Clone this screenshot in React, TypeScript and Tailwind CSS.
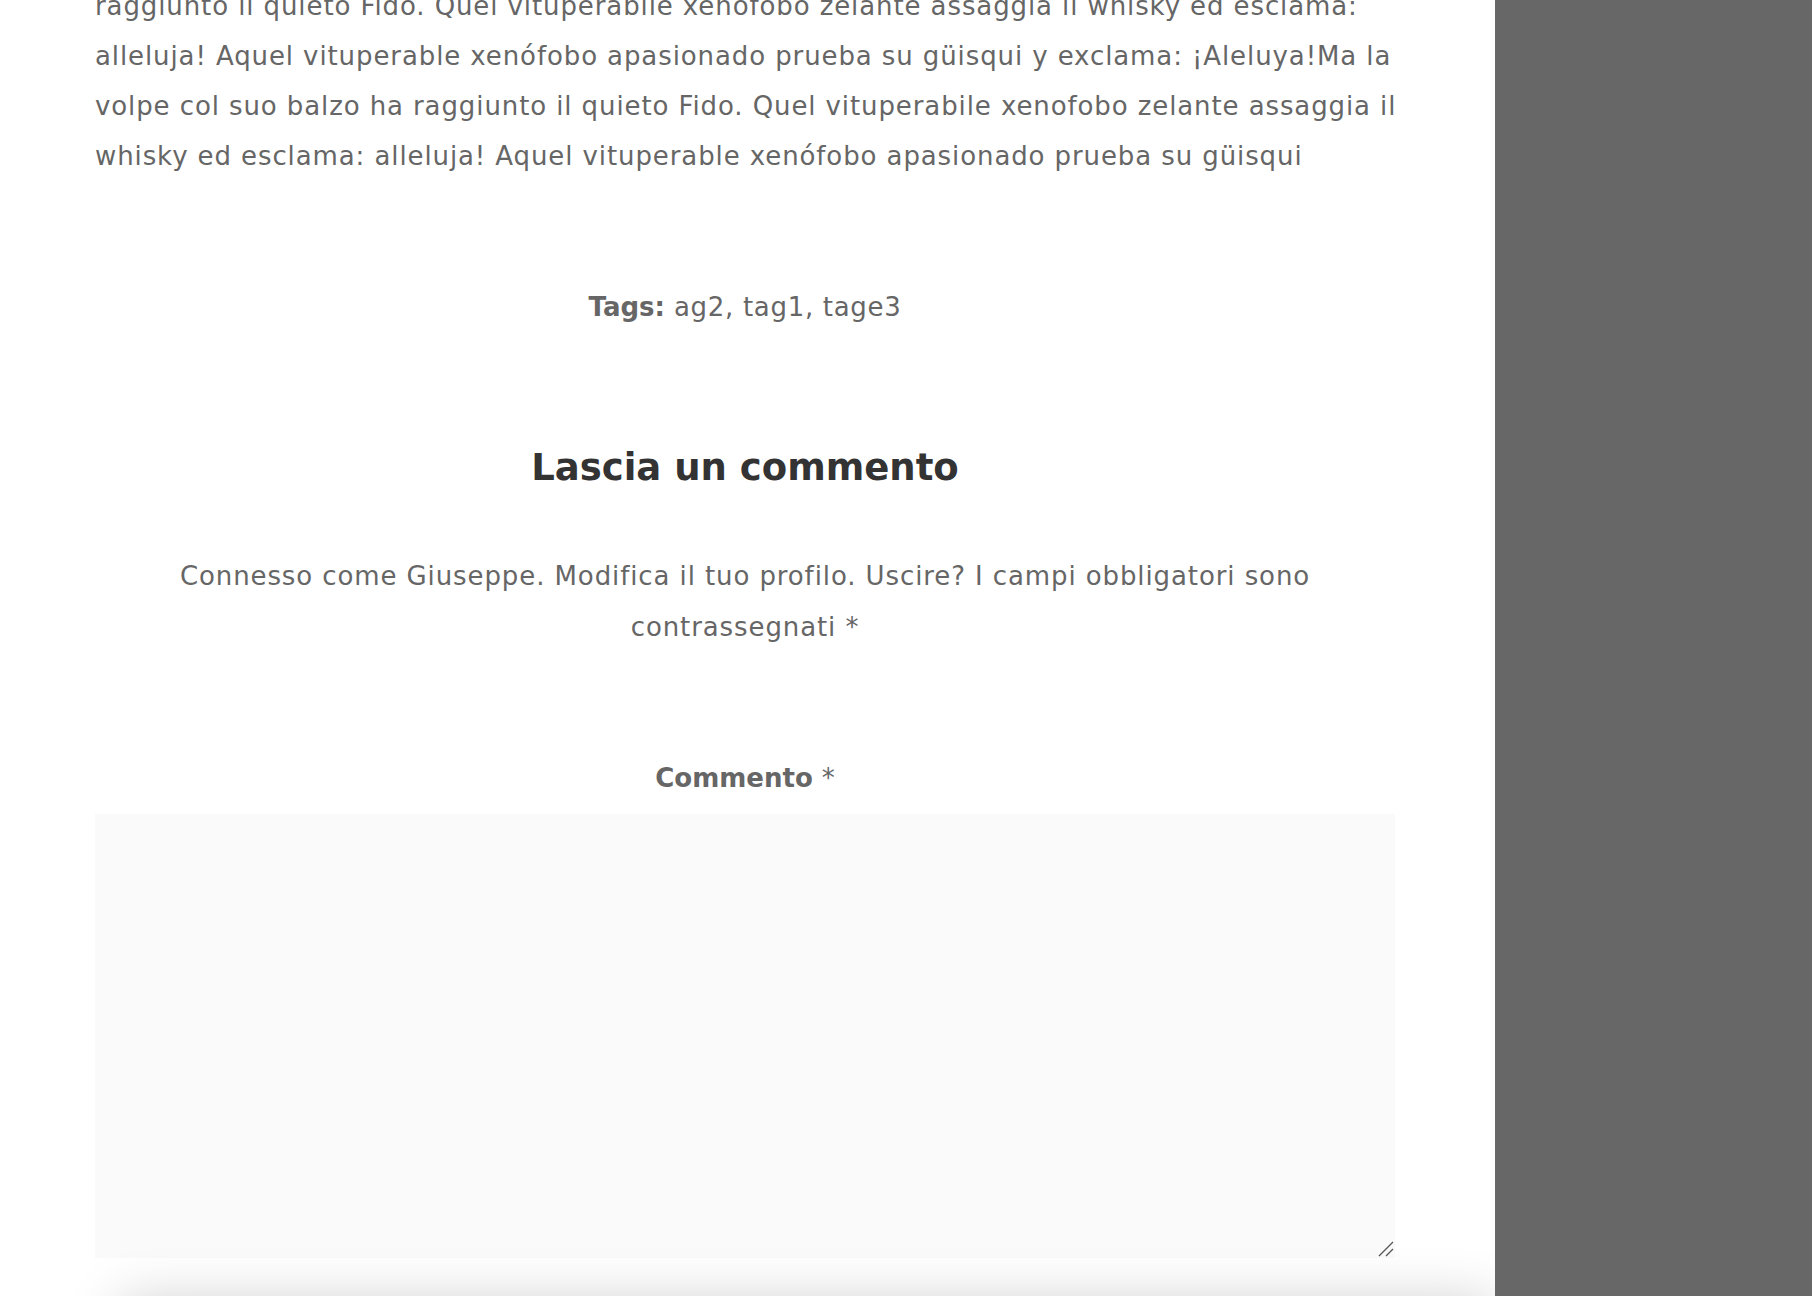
import React from 'react';

const body = '"DejaVu Sans", "Noto Sans", sans-serif';

export default function App() {
  return (
    <div className="flex h-screen w-full overflow-hidden bg-white" style={{ fontFamily: body }}>
      <main className="relative w-[1495px] shrink-0 overflow-hidden pl-[95px] pr-[100px] text-[#666]">
        <p className="-mt-[19px] whitespace-nowrap text-[26px] leading-[50px] tracking-[0.9px]">
          raggiunto il quieto Fido. Quel vituperabile xenofobo zelante assaggia il whisky ed esclama:
          <br />
          alleluja! Aquel vituperable xenófobo apasionado prueba su güisqui y exclama: ¡Aleluya!Ma la
          <br />
          volpe col suo balzo ha raggiunto il quieto Fido. Quel vituperabile xenofobo zelante assaggia il
          <br />
          whisky ed esclama: alleluja! Aquel vituperable xenófobo apasionado prueba su güisqui
        </p>

        <p className="mt-[101px] text-center text-[26px] leading-[50px] tracking-[0.7px]">
          <span className="font-bold tracking-normal">Tags:</span> ag2, tag1, tage3
        </p>

        <h2 className="mt-[112px] text-center text-[37px] font-bold leading-[48px] text-[#333]">
          Lascia un commento
        </h2>

        <p className="mt-[59px] text-center text-[26px] leading-[51px] tracking-[0.9px]">
          Connesso come Giuseppe. Modifica il tuo profilo. Uscire? I campi obbligatori sono
          <br />
          contrassegnati *
        </p>

        <label className="mt-[105px] block text-center text-[26px] font-bold leading-[40px]">
          Commento <span className="font-normal">*</span>
        </label>
        <div className="relative mt-[16px]">
          <textarea className="block h-[444px] w-full resize-none border-0 bg-[#fafafa] outline-none" />
          <svg
            className="pointer-events-none absolute bottom-0 right-0"
            width="18"
            height="18"
            viewBox="0 0 18 18"
          >
            <path d="M2 16 L16 2 M9 16 L16 9" stroke="#555" strokeWidth="1.3" fill="none" />
          </svg>
        </div>

        {/* sticky bar shadow peeking from below the fold */}
        <div className="pointer-events-none absolute left-[120px] right-0 top-[1302px] h-[120px] shadow-[0_0_55px_rgba(0,0,0,0.2)]" />
      </main>
      <aside className="flex-1 bg-[#676767]" />
    </div>
  );
}
